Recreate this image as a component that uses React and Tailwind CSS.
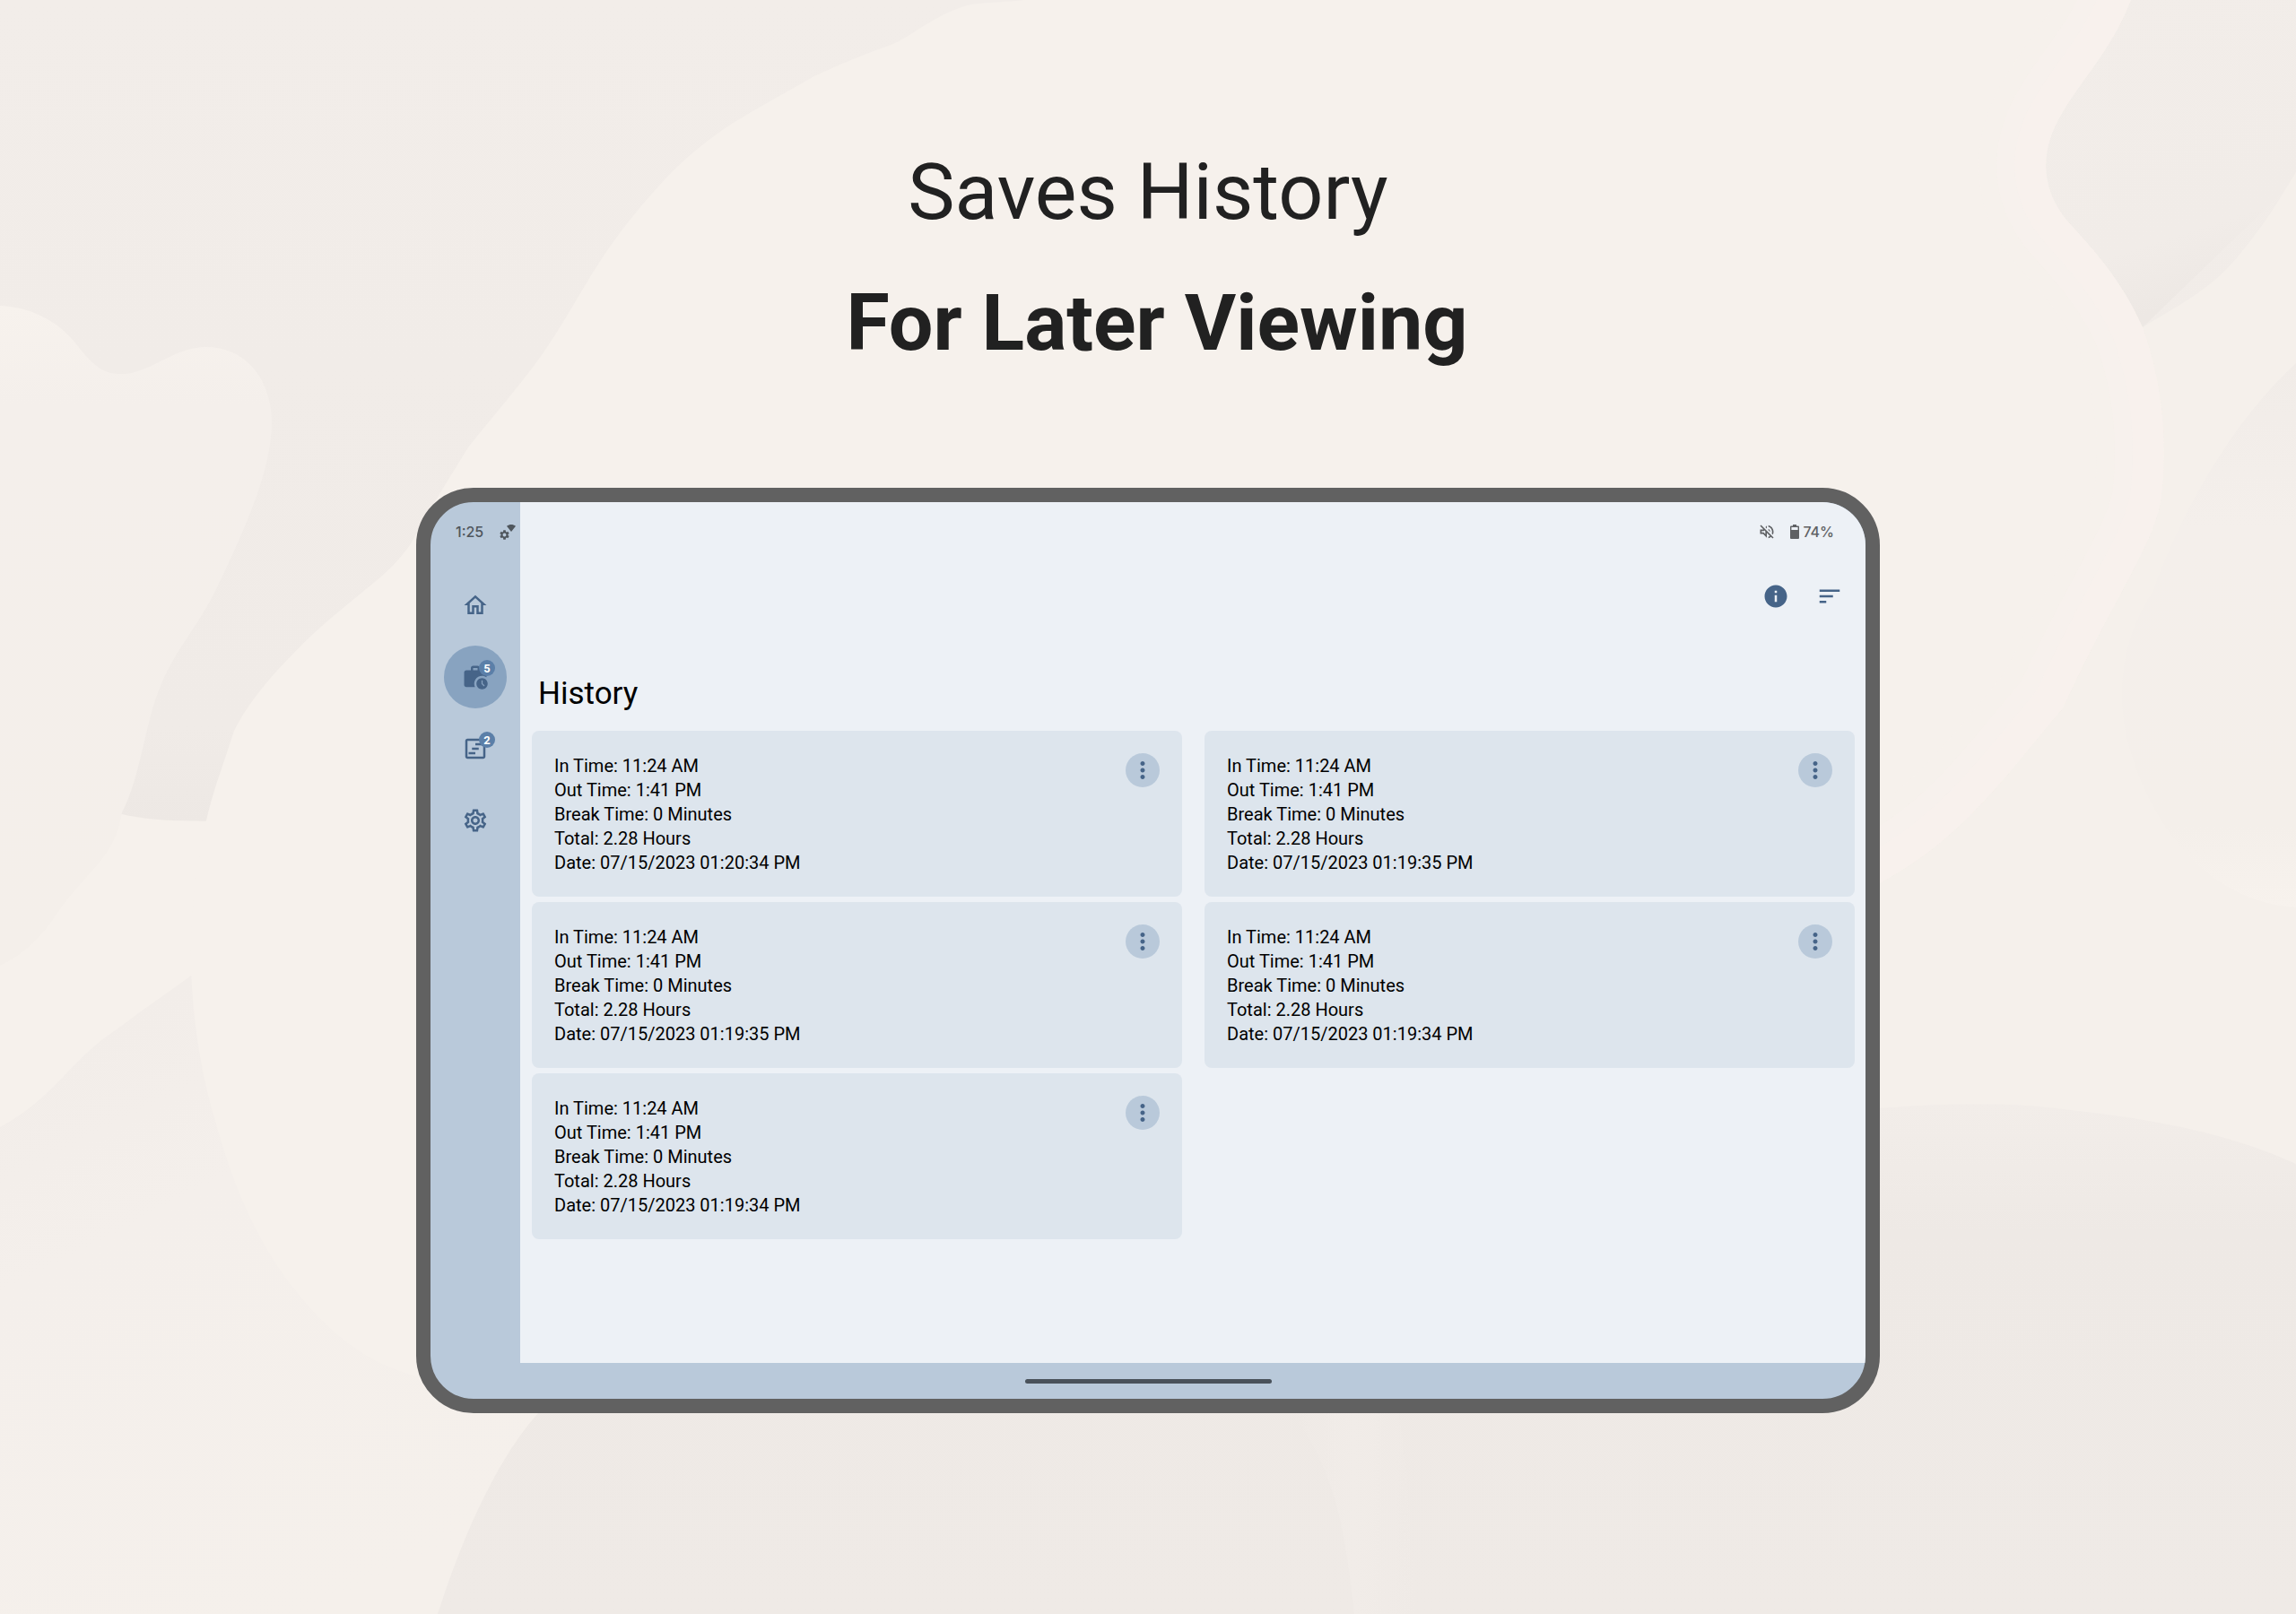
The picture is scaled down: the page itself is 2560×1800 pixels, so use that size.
import {
  MdInfo,
  MdMoreVert,
  MdOutlineHome,
  MdOutlineSettings,
  MdOutlineViewTimeline,
  MdOutlineVolumeOff,
  MdSettings,
  MdSort,
  MdWorkHistory,
} from "react-icons/md";

const ENTRIES = [
  "07/15/2023 01:20:34 PM",
  "07/15/2023 01:19:35 PM",
  "07/15/2023 01:19:35 PM",
  "07/15/2023 01:19:34 PM",
  "07/15/2023 01:19:34 PM",
];

const MAIN_EDGE =
  "M2376 0C2355 55 2320 90 2300 125C2275 165 2275 205 2300 240C2320 265 2360 300 2389 365C2405 410 2418 470 2411 545C2408 600 2360 660 2300 790C2240 860 2190 935 2096 985";

function Backdrop() {
  return (
    <svg
      aria-hidden="true"
      className="absolute inset-0 -z-10 h-full w-full"
      viewBox="0 0 2560 1800"
      preserveAspectRatio="xMidYMin slice"
    >
      <defs>
        <linearGradient id="base" x1="0" y1="0" x2="0" y2="1">
          <stop offset="0" stopColor="#f2ede9" />
          <stop offset="0.45" stopColor="#f0ebe7" />
          <stop offset="0.51" stopColor="#ede8e4" />
        </linearGradient>
        <linearGradient id="corner" x1="0" y1="0" x2="0.25" y2="1">
          <stop offset="0" stopColor="#f2ede9" />
          <stop offset="0.8" stopColor="#f1ece8" />
          <stop offset="1" stopColor="#ede8e4" />
        </linearGradient>
        <linearGradient id="lowerLeft" x1="0" y1="0" x2="0.5" y2="1">
          <stop offset="0" stopColor="#f1ece8" />
          <stop offset="0.4" stopColor="#f4efeb" />
          <stop offset="1" stopColor="#f5f0eb" />
        </linearGradient>
        <linearGradient id="leftBlob" x1="0" y1="0" x2="0" y2="1">
          <stop offset="0" stopColor="#f7f2ed" />
          <stop offset="0.15" stopColor="#f4efeb" />
          <stop offset="1" stopColor="#f4efea" />
        </linearGradient>
        <linearGradient id="rightBlob" x1="0" y1="0" x2="0" y2="1">
          <stop offset="0" stopColor="#f1ece8" />
          <stop offset="0.3" stopColor="#f4efeb" />
          <stop offset="0.85" stopColor="#f4efea" />
          <stop offset="1" stopColor="#f7f2ed" />
        </linearGradient>
        <linearGradient id="lowerRight" x1="0" y1="0" x2="0" y2="1">
          <stop offset="0" stopColor="#f2ede9" />
          <stop offset="0.25" stopColor="#eee9e5" />
          <stop offset="1" stopColor="#efeae6" />
        </linearGradient>
        <linearGradient id="fold" x1="0" y1="0" x2="1" y2="0">
          <stop offset="0" stopColor="#f1ece8" stopOpacity="0" />
          <stop offset="0.5" stopColor="#f1ece8" />
          <stop offset="1" stopColor="#f1ece8" stopOpacity="0" />
        </linearGradient>
        <clipPath id="mainClip">
          <path d="M1143 0C1115 3 1090 3 1078 6C1040 18 1020 38 996 49C960 62 935 72 906 86C875 104 845 120 816 138C785 158 757 182 735 207C705 240 682 270 661 304C640 338 625 366 604 396C578 432 548 466 522 499L490 551L457 608C444 626 430 640 408 657C378 682 352 702 327 729C298 758 275 787 261 815C250 850 238 880 230 915C216 980 212 1030 213 1080C215 1140 225 1200 240 1250C262 1330 290 1390 330 1440C370 1490 410 1520 464 1535L2096 985C2190 935 2240 860 2300 790C2360 660 2408 600 2411 545C2418 470 2405 410 2389 365C2360 300 2320 265 2300 240C2275 205 2275 165 2300 125C2320 90 2355 55 2376 0Z" />
        </clipPath>
      </defs>
      <rect width="2560" height="1800" fill="url(#base)" />
      <path d="M0 900L136 908C170 916 200 915 240 916V1300H0Z" fill="#f6f1ec" />
      <path d="M0 1257C60 1225 80 1180 130 1148C160 1125 190 1105 220 1083L700 1300L640 1576C570 1620 530 1710 488 1800H0Z" fill="url(#lowerLeft)" />
      <path d="M0 341C40 343 70 362 89 389C108 412 118 418 140 417C170 414 195 387 230 387C275 387 303 424 303 472C302 530 268 600 241 657C220 700 195 725 179 765C163 800 156 870 136 906C128 960 95 970 58 1027C40 1052 20 1068 0 1077Z" fill="url(#leftBlob)" />
      <path d="M2280 0H2560V200L2389 365H2280Z" fill="url(#corner)" />
      <path d="M2389 365C2430 340 2470 320 2500 280C2525 250 2540 225 2560 192V1320H2000V960Z" fill="#f5f0eb" />
      <path d="M2560 405C2500 460 2440 550 2400 660C2360 720 2360 790 2376 840C2400 920 2460 1005 2560 1012Z" fill="url(#rightBlob)" />
      <path d="M2000 1245C2120 1232 2220 1226 2300 1237C2400 1248 2480 1262 2560 1298V1800H488C520 1700 560 1620 600 1576V1400Z" fill="url(#lowerRight)" />
      <path d="M1440 1576H1560C1570 1650 1575 1720 1580 1800H1510C1500 1710 1490 1640 1440 1576Z" fill="url(#fold)" />
      <g clipPath="url(#mainClip)" fill="none" stroke="#faf5f0">
        <rect width="2560" height="1800" fill="#f6f1ec" stroke="none" />
        <path d={MAIN_EDGE} strokeWidth="150" strokeOpacity="0.2" />
        <path d={MAIN_EDGE} strokeWidth="110" strokeOpacity="0.25" />
        <path d={MAIN_EDGE} strokeWidth="70" strokeOpacity="0.25" />
      </g>
    </svg>
  );
}

function Badge({ children }) {
  return (
    <span className="absolute left-1/2 top-1/2 ml-1 -mt-[19px] flex size-[18px] items-center justify-center rounded-full bg-[#5b7fa8] text-[13px] font-bold leading-none text-white">
      {children}
    </span>
  );
}

function RailButton({ icon: Icon, label, badge, active }) {
  return (
    <button
      type="button"
      aria-label={label}
      aria-current={active ? "page" : undefined}
      className={`relative flex size-[70px] items-center justify-center rounded-full text-[#466488] ${
        active ? "bg-[#88a3c0]" : ""
      }`}
    >
      <Icon className="size-[30px]" />
      {badge && <Badge>{badge}</Badge>}
    </button>
  );
}

function WifiSettingsIcon() {
  return (
    <span className="flex items-start">
      <MdSettings className="mt-[5px] -mr-1 size-[13px]" />
      <svg viewBox="0 0 10 8" className="h-2 w-2.5" fill="currentColor" aria-hidden="true">
        <path d="M0 1.8C3 -0.5 7 -0.5 10 1.8L5 8Z" />
      </svg>
    </span>
  );
}

function BatteryIcon() {
  return (
    <svg viewBox="0 0 10 16" className="h-4 w-2.5" fill="currentColor" aria-hidden="true">
      <path
        fillRule="evenodd"
        d="M3 0H7V1.4H9A1 1 0 0 1 10 2.4V15A1 1 0 0 1 9 16H1A1 1 0 0 1 0 15V2.4A1 1 0 0 1 1 1.4H3ZM1.4 3V6H8.6V3Z"
      />
    </svg>
  );
}

function EntryCard({ date }) {
  return (
    <article className="flex items-start justify-between rounded-lg bg-[#dde5ed] px-[25px] pb-6 pt-[25px] text-xl leading-[27px] text-black">
      <div className="pt-px">
        <p>In Time: 11:24 AM</p>
        <p>Out Time: 1:41 PM</p>
        <p>Break Time: 0 Minutes</p>
        <p>Total: 2.28 Hours</p>
        <p>Date: {date}</p>
      </div>
      <button
        type="button"
        aria-label="Entry options"
        className="flex size-[38px] items-center justify-center rounded-full bg-[#b9c9da] text-[#466488]"
      >
        <MdMoreVert className="size-[30px]" />
      </button>
    </article>
  );
}

export default function App() {
  return (
    <div className="relative isolate flex min-h-screen flex-col items-center overflow-hidden bg-[#f1ede9] px-8 pb-56 pt-[141px] font-['Roboto',sans-serif]">
      <Backdrop />

      <h1 className="text-center text-[88px] leading-[146px] text-[#212121]">
        <span className="block font-normal">Saves History</span>
        <span className="block pl-5 font-bold">For Later Viewing</span>
      </h1>

      <div className="mt-[111px] flex w-full max-w-[1632px] flex-col overflow-hidden rounded-[64px] border-16 border-[#616161] bg-[#b9c9da]">
        <div className="flex min-h-[960px]">
          <aside className="flex w-[100px] shrink-0 flex-col items-center">
            <div className="flex h-20 w-full items-start justify-between pl-7 pr-[5px] pt-[25px] text-[#4f565d]">
              <time className="font-['Inter',sans-serif] text-base font-medium leading-4">1:25</time>
              <WifiSettingsIcon />
            </div>
            <nav aria-label="Main" className="flex flex-col gap-2.5">
              <RailButton icon={MdOutlineHome} label="Home" />
              <RailButton icon={MdWorkHistory} label="History" badge="5" active />
              <RailButton icon={MdOutlineViewTimeline} label="Timeline" badge="2" />
              <RailButton icon={MdOutlineSettings} label="Settings" />
            </nav>
          </aside>

          <main className="flex-1 bg-[#edf1f6] pl-[13px] pr-3">
            <div className="flex items-center justify-end pr-[23px] pt-[23px] text-[#5f6164]">
              <MdOutlineVolumeOff className="mr-4 size-5" />
              <BatteryIcon />
              <span className="ml-1 font-['Inter',sans-serif] text-base font-medium leading-4">74%</span>
            </div>
            <div className="mt-[47px] flex justify-end gap-[30px] pr-[13px] text-[#466488]">
              <button type="button" aria-label="Information">
                <MdInfo className="size-[30px]" />
              </button>
              <button type="button" aria-label="Sort">
                <MdSort className="size-[30px]" />
              </button>
            </div>
            <h2 className="mt-[71px] pl-[7px] text-[35px] leading-[46px] text-black">History</h2>
            <div className="mt-[18px] grid grid-cols-2 gap-x-[25px] gap-y-1.5">
              {ENTRIES.map((date, index) => (
                <EntryCard key={index} date={date} />
              ))}
            </div>
          </main>
        </div>
        <div className="flex h-10 items-center justify-center">
          <div className="h-[5px] w-[275px] rounded-full bg-[#4a525b]" />
        </div>
      </div>
    </div>
  );
}
